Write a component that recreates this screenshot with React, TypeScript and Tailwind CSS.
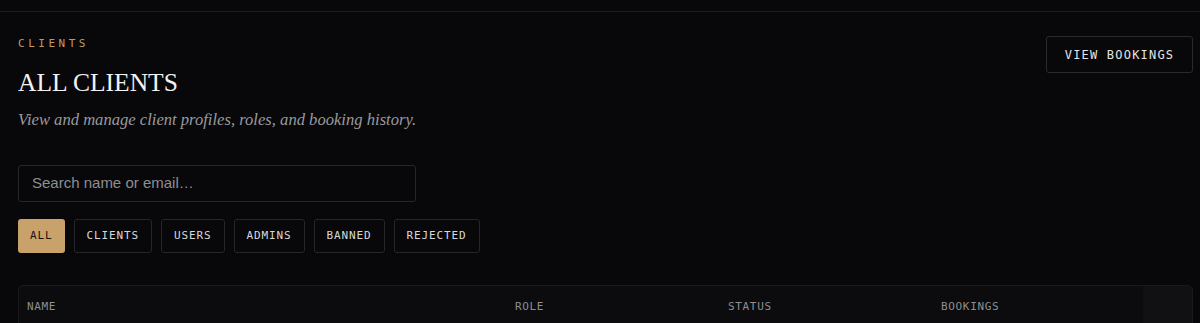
const FILTERS = ['ALL', 'CLIENTS', 'USERS', 'ADMINS', 'BANNED', 'REJECTED']

const mono = "font-['DejaVu_Sans_Mono',monospace]"
const serif = "font-['Liberation_Serif',serif]"

export default function App() {
  const active = 'ALL'

  return (
    <div className="min-h-screen overflow-hidden bg-[#08080a] text-gray-200">
      {/* top nav edge */}
      <div className="h-[12px] border-b border-[#1c1c1f]" />

      <main className="pl-[18px] pr-[7px] pt-[25px]">
        <div className="flex items-start justify-between">
          <div>
            <p className={`${mono} text-[11px] leading-[14px] tracking-[0.32em] text-[#bd9a6c]`}>
              CLIENTS
            </p>
            <h1 className={`${serif} mt-[17px] text-[25.5px] leading-[30px] text-[#f2f2f2]`}>
              ALL CLIENTS
            </h1>
            <p className={`${serif} mt-[12px] text-[16.6px] italic leading-[20px] text-[#9a9a9e]`}>
              View and manage client profiles, roles, and booking history.
            </p>
          </div>
          <button
            className={`${mono} mt-[-1px] h-[37px] w-[147px] rounded-[3px] border border-[#2a2a2e] text-[12px] tracking-[0.1em] text-[#e4e4e4]`}
          >
            VIEW BOOKINGS
          </button>
        </div>

        <div className="mt-[35px] flex h-[37px] w-[398px] items-center rounded-[3px] border border-[#26262a] px-[13px]">
          <span className="font-['Liberation_Sans',sans-serif] text-[15px] text-[#8e8e93]">
            Search name or email…
          </span>
        </div>

        <div className="mt-[17px] flex gap-[9px]">
          {FILTERS.map((f) => (
            <button
              key={f}
              className={
                f === active
                  ? `${mono} h-[34px] rounded-[3px] bg-[#c9a26b] px-[12px] text-[11px] tracking-[0.08em] text-[#1a1408]`
                  : `${mono} h-[34px] rounded-[3px] border border-[#26262a] px-[12px] text-[11px] tracking-[0.08em] text-[#d8d8d8]`
              }
            >
              {f}
            </button>
          ))}
        </div>

        <div className="mt-[32px] overflow-hidden rounded-t-[5px] border border-[#1a1a1d] bg-[#0c0c0e]">
          <div className={`${mono} grid h-[42px] grid-cols-[496px_213px_213px_202px_1fr] items-center text-[11px] tracking-[0.06em] text-[#8e8e93]`}>
            <span className="pl-[8px]">NAME</span>
            <span>ROLE</span>
            <span>STATUS</span>
            <span>BOOKINGS</span>
            <span className="h-full bg-[#111114]" />
          </div>
        </div>
      </main>
    </div>
  )
}
